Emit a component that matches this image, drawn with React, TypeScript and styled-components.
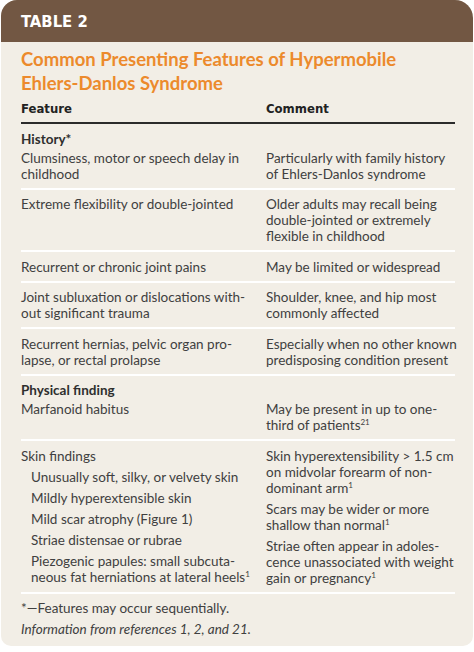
import React from "react";
import styled, { createGlobalStyle } from "styled-components";

const GlobalStyle = createGlobalStyle`
  html, body {
    margin: 0;
    padding: 0;
    background: #ffffff;
  }
  body {
    font-family: Lato, "Open Sans", "Liberation Sans", sans-serif;
    color: #404040;
  }
`;

const Card = styled.div`
  width: 472px;
  height: 646px;
  margin-left: 1px;
  background: #f2eee6;
  border-radius: 16px 18px 10px 10px;
  overflow: hidden;
  display: flex;
  flex-direction: column;
`;

const Banner = styled.div`
  height: 42px;
  flex-shrink: 0;
  background: #725743;
  color: #ffffff;
  display: flex;
  align-items: center;
  padding-left: 20px;
  font-family: "DejaVu Sans Condensed", "Liberation Sans Narrow", "Liberation Sans", sans-serif;
  font-stretch: condensed;
  font-weight: 700;
  font-size: 16.5px;
`;

const Body = styled.div`
  padding: 5px 18px 0 20px;
`;

const Title = styled.h1`
  margin: 0;
  font-size: 18.5px;
  line-height: 24px;
  font-weight: 700;
  color: #ec8a2c;
`;

const Table = styled.div`
  width: 434px;
  margin-top: 6px;
`;

const Row = styled.div<{ $line?: "light" | "none" }>`
  display: grid;
  grid-template-columns: 245px 1fr;
  padding: ${(p) => (p.$line === "none" ? "3px 0 6px" : "6.5px 0 6px")};
  border-top: ${(p) => (p.$line === "none" ? "none" : "2px solid #ffffff")};
`;

const HeadRow = styled.div`
  display: grid;
  grid-template-columns: 245px 1fr;
  padding: 0 0 5px;
  font-family: "DejaVu Sans Condensed", "Liberation Sans Narrow", "Liberation Sans", sans-serif;
  font-stretch: condensed;
  font-weight: 700;
  font-size: 13px;
  line-height: 16px;
  color: #222222;
`;

const Section = styled.div<{ $line?: "dark" | "light" }>`
  padding: 6.5px 0 0;
  font-weight: 700;
  font-size: 13.5px;
  line-height: 16px;
  color: #2e2e2e;
  border-top: ${(p) => (p.$line === "dark" ? "2px solid #2b2b2b" : "2px solid #ffffff")};
`;

const Cell = styled.div`
  font-size: 13.5px;
  line-height: 16px;
  white-space: nowrap;
`;

const Stack = styled.div`
  display: flex;
  flex-direction: column;
  gap: 5px;
`;

const SubItem = styled.div`
  padding-left: 10px;
`;

const Sup = styled.sup`
  font-size: 8px;
  line-height: 0;
  vertical-align: 5px;
`;

const Notes = styled.div`
  border-top: 2px solid #ffffff;
  padding-top: 6.5px;
  display: flex;
  flex-direction: column;
  gap: 5px;
`;

const Note = styled.div<{ $italic?: boolean }>`
  font-size: 13.5px;
  line-height: 16px;
  font-style: ${(p) => (p.$italic ? "italic" : "normal")};
`;

type Entry = { feature: string[]; comment: string[] };

const history: Entry[] = [
  {
    feature: ["Clumsiness, motor or speech delay in", "childhood"],
    comment: ["Particularly with family history", "of Ehlers-Danlos syndrome"],
  },
  {
    feature: ["Extreme flexibility or double-jointed"],
    comment: ["Older adults may recall being", "double-jointed or extremely", "flexible in childhood"],
  },
  {
    feature: ["Recurrent or chronic joint pains"],
    comment: ["May be limited or widespread"],
  },
  {
    feature: ["Joint subluxation or dislocations with-", "out significant trauma"],
    comment: ["Shoulder, knee, and hip most", "commonly affected"],
  },
  {
    feature: ["Recurrent hernias, pelvic organ pro-", "lapse, or rectal prolapse"],
    comment: ["Especially when no other known", "predisposing condition present"],
  },
];

const Lines = ({ lines }: { lines: string[] }) => (
  <>
    {lines.map((l, i) => (
      <div key={i}>{l}</div>
    ))}
  </>
);

export default function App() {
  return (
    <>
      <GlobalStyle />
      <Card>
        <Banner>TABLE 2</Banner>
        <Body>
          <Title>
            Common Presenting Features of Hypermobile
            <br />
            Ehlers-Danlos Syndrome
          </Title>
          <Table>
            <HeadRow>
              <div>Feature</div>
              <div>Comment</div>
            </HeadRow>
            <Section $line="dark">History*</Section>
            {history.map((h, i) => (
              <Row key={i} $line={i === 0 ? "none" : "light"}>
                <Cell>
                  <Lines lines={h.feature} />
                </Cell>
                <Cell>
                  <Lines lines={h.comment} />
                </Cell>
              </Row>
            ))}
            <Section $line="light">Physical finding</Section>
            <Row $line="none">
              <Cell>Marfanoid habitus</Cell>
              <Cell>
                <div>May be present in up to one-</div>
                <div>
                  third of patients<Sup>21</Sup>
                </div>
              </Cell>
            </Row>
            <Row $line="light">
              <Cell>
                <Stack>
                  <div>Skin findings</div>
                  <SubItem>Unusually soft, silky, or velvety skin</SubItem>
                  <SubItem>Mildly hyperextensible skin</SubItem>
                  <SubItem>Mild scar atrophy (Figure 1)</SubItem>
                  <SubItem>Striae distensae or rubrae</SubItem>
                  <SubItem>
                    <div>Piezogenic papules: small subcuta-</div>
                    <div>
                      neous fat herniations at lateral heels<Sup>1</Sup>
                    </div>
                  </SubItem>
                </Stack>
              </Cell>
              <Cell>
                <Stack>
                  <div>
                    <div>Skin hyperextensibility &gt; 1.5 cm</div>
                    <div>on midvolar forearm of non-</div>
                    <div>
                      dominant arm<Sup>1</Sup>
                    </div>
                  </div>
                  <div>
                    <div>Scars may be wider or more</div>
                    <div>
                      shallow than normal<Sup>1</Sup>
                    </div>
                  </div>
                  <div>
                    <div>Striae often appear in adoles-</div>
                    <div>cence unassociated with weight</div>
                    <div>
                      gain or pregnancy<Sup>1</Sup>
                    </div>
                  </div>
                </Stack>
              </Cell>
            </Row>
            <Notes>
              <Note>*—Features may occur sequentially.</Note>
              <Note $italic>Information from references 1, 2, and 21.</Note>
            </Notes>
          </Table>
        </Body>
      </Card>
    </>
  );
}
